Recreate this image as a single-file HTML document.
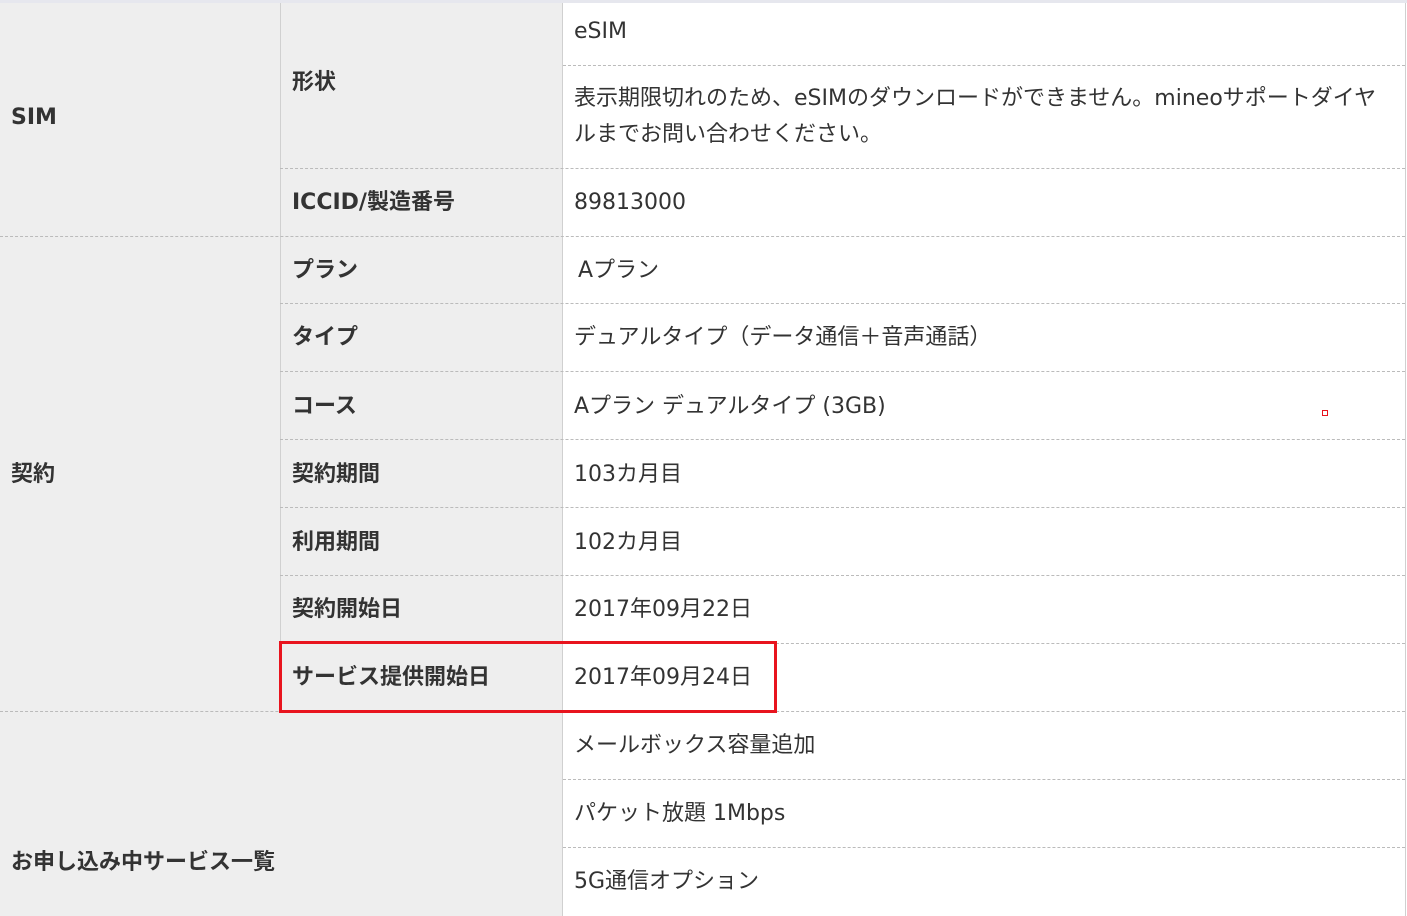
<!DOCTYPE html>
<html><head><meta charset="utf-8"><style>
body{margin:0;width:1407px;height:916px;overflow:hidden;background:#fff;font-family:"DejaVu Sans","Noto Sans CJK JP",sans-serif;color:#333;position:relative}
.g{position:absolute;background:#eeeeee}
.t{position:absolute;font-size:22px;line-height:26px;white-space:nowrap}
.b{font-weight:bold;font-size:22px}
.h{position:absolute;height:0;border-top:1px dashed #bbb}
.v{position:absolute;width:1px;background:#d0d0d0}
</style></head><body>
<div style="position:absolute;left:0;top:0;width:1407px;height:3px;background:#e6e7ee"></div>
<div class="g" style="left:0;top:3px;width:562px;height:913px"></div>
<div class="v" style="left:280px;top:3px;height:708px"></div>
<div class="v" style="left:562px;top:3px;height:913px"></div>
<div class="v" style="left:1405px;top:3px;height:913px"></div>
<div class="h" style="left:563px;top:65px;width:842px"></div>
<div class="h" style="left:280px;top:168px;width:1125px"></div>
<div class="h" style="left:0;top:236px;width:1405px"></div>
<div class="h" style="left:280px;top:303px;width:1125px"></div>
<div class="h" style="left:280px;top:371px;width:1125px"></div>
<div class="h" style="left:280px;top:439px;width:1125px"></div>
<div class="h" style="left:280px;top:507px;width:1125px"></div>
<div class="h" style="left:280px;top:575px;width:1125px"></div>
<div class="h" style="left:280px;top:643px;width:1125px"></div>
<div class="h" style="left:0;top:711px;width:1405px"></div>
<div class="h" style="left:563px;top:779px;width:842px"></div>
<div class="h" style="left:563px;top:847px;width:842px"></div>

<div class="t b" style="left:11px;top:105px">SIM</div>
<div class="t b" style="left:11px;top:462px">契約</div>
<div class="t b" style="left:11px;top:850px">お申し込み中サービス一覧</div>

<div class="t b" style="left:292px;top:70px">形状</div>
<div class="t b" style="left:292px;top:190px">ICCID/製造番号</div>
<div class="t b" style="left:292px;top:258px">プラン</div>
<div class="t b" style="left:292px;top:325px">タイプ</div>
<div class="t b" style="left:292px;top:394px">コース</div>
<div class="t b" style="left:292px;top:462px">契約期間</div>
<div class="t b" style="left:292px;top:530px">利用期間</div>
<div class="t b" style="left:292px;top:597px">契約開始日</div>
<div class="t b" style="left:292px;top:665px">サービス提供開始日</div>

<div class="t" style="left:574px;top:19px">eSIM</div>
<div class="t" style="left:574px;top:81px;line-height:36px;white-space:normal;width:815px">表示期限切れのため、eSIMのダウンロードができません。mineoサポートダイヤルまでお問い合わせください。</div>
<div class="t" style="left:574px;top:190px">89813000</div>
<div class="t" style="left:578px;top:258px">Aプラン</div>
<div class="t" style="left:574px;top:325px">デュアルタイプ（データ通信＋音声通話）</div>
<div class="t" style="left:574px;top:394px">Aプラン デュアルタイプ (3GB)</div>
<div class="t" style="left:574px;top:462px">103カ月目</div>
<div class="t" style="left:574px;top:530px">102カ月目</div>
<div class="t" style="left:574px;top:597px">2017年09月22日</div>
<div class="t" style="left:574px;top:665px">2017年09月24日</div>
<div class="t" style="left:574px;top:733px">メールボックス容量追加</div>
<div class="t" style="left:574px;top:801px">パケット放題 1Mbps</div>
<div class="t" style="left:574px;top:869px">5G通信オプション</div>

<div style="position:absolute;left:279px;top:641px;width:492px;height:66px;border:3px solid #e8141e"></div>
<div style="position:absolute;left:1322px;top:410px;width:4px;height:4px;border:1px solid #e8141e"></div>
</body></html>
